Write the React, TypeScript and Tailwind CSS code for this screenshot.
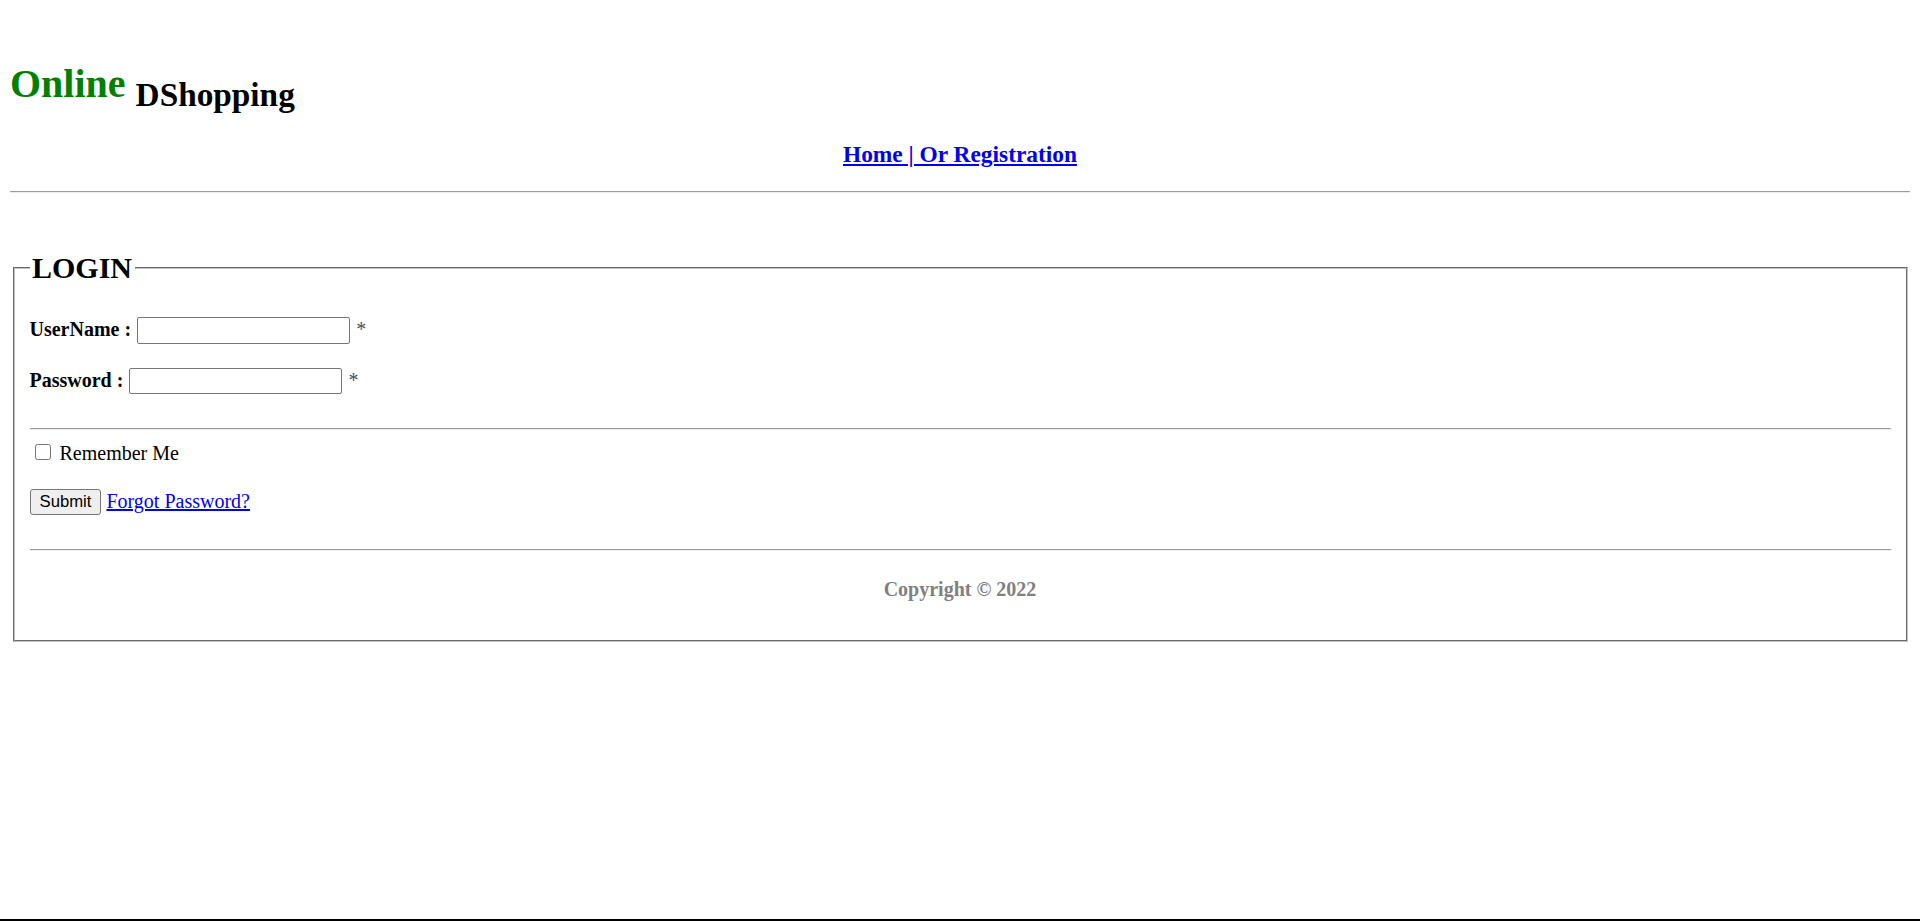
import React from "react";

export default function App() {
  return (
    <div className="h-[921px] flex flex-col bg-white text-black font-['Liberation_Serif',serif] text-[20px]">
      <div className="flex flex-col px-[10px]">
        {/* Brand */}
        <h1 className="mt-[61px] h-[58px] leading-[46px] text-[40px] font-bold whitespace-nowrap">
          <span className="text-[#008000]">Online</span>{" "}
          <span className="text-[33.3px] align-[-9px]">DShopping</span>
        </h1>

        {/* Top links */}
        <h3 className="mt-[22px] text-center text-[23.4px] leading-[27px] font-bold">
          <a href="#" className="text-[#0000ee] underline">
            Home | Or Registration
          </a>
        </h3>

        <div className="mt-[23px] border-t border-t-[#9a9a9a] border-b border-b-[#eeeeee]" />

        {/* Login box */}
        <fieldset className="mt-[58px] mx-[2.5px] border-2 [border-style:groove] border-[#c0c0c0] px-[15px] pt-0 pb-[39px]">
          <legend className="px-[2.5px] text-[30px] leading-[34.5px] font-bold">LOGIN</legend>

          <div className="mt-[31px] h-[27px] flex items-center gap-[6px]">
            <b className="leading-[23px] pb-[2px]">UserName :</b>
            <input type="text" className="w-[213px] h-[27px] bg-white border border-[#767676] rounded-[2px] px-[2px] text-[16px] font-['Liberation_Sans',sans-serif]" />
            <span className="leading-[23px] pb-[2px] text-[#4a4f5a]">*</span>
          </div>

          <div className="mt-[24px] h-[27px] flex items-center gap-[6px]">
            <b className="leading-[23px] pb-[2px]">Password :</b>
            <input type="password" className="w-[213px] h-[26px] bg-white border border-[#767676] rounded-[2px] px-[2px] text-[16px] font-['Liberation_Sans',sans-serif]" />
            <span className="leading-[23px] pb-[2px] text-[#4a4f5a]">*</span>
          </div>

          <div className="mt-[33px] border-t border-t-[#9a9a9a] border-b border-b-[#eeeeee]" />

          <label className="mt-[12px] h-[23px] flex items-center">
            <input type="checkbox" className="ml-[5px] mr-[4px] mb-[2px] w-[16px] h-[16px]" />
            <span className="ml-[5px] leading-[23px]">Remember Me</span>
          </label>

          <div className="mt-[24px] h-[26px] flex items-center gap-[5px]">
            <button className="h-[26px] px-[9px] bg-[#efefef] border border-[#767676] rounded-[3px] text-[16.7px] leading-[19px] font-['Liberation_Sans',sans-serif]">
              Submit
            </button>
            <a href="#" className="leading-[23px] text-[#0000ee] underline">
              Forgot Password?
            </a>
          </div>

          <div className="mt-[34px] border-t border-t-[#9a9a9a] border-b border-b-[#eeeeee]" />

          <p className="mt-[27px] text-center leading-[23px] font-bold text-[#808080]">Copyright © 2022</p>
        </fieldset>
      </div>

      {/* bottom edge */}
      <div className="mt-auto h-[2px] bg-black" />
    </div>
  );
}
